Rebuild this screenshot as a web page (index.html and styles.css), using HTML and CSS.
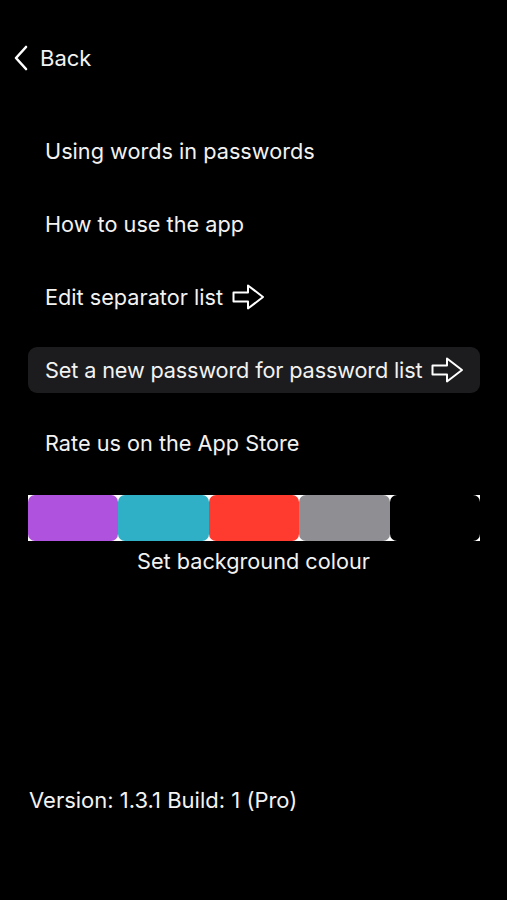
FILE: index.html
```html
<!DOCTYPE html>
<html>
<head>
<meta charset="utf-8">
<link rel="stylesheet" href="styles.css">
</head>
<body>
<div class="screen">
  <div class="nav">
    <svg class="chev" width="16" height="26" viewBox="0 0 16 26"><path d="M13 2 L3 13 L13 24" fill="none" stroke="#fff" stroke-width="2.6" stroke-linecap="round" stroke-linejoin="round"/></svg>
    <span class="back">Back</span>
  </div>
  <div class="menu">
    <div class="row">Using words in passwords</div>
    <div class="row">How to use the app</div>
    <div class="row">Edit separator list <svg class="arrow" width="33" height="26" viewBox="0 0 33 26"><path d="M1.5 8.5 H16 V1.5 L31 13 L16 24.5 V17.5 H1.5 Z" fill="none" stroke="#fff" stroke-width="2" stroke-linejoin="round"/></svg></div>
    <div class="row sel"><span class="tight">Set a new password for password list</span> <svg class="arrow" width="33" height="26" viewBox="0 0 33 26"><path d="M1.5 8.5 H16 V1.5 L31 13 L16 24.5 V17.5 H1.5 Z" fill="none" stroke="#fff" stroke-width="2" stroke-linejoin="round"/></svg></div>
    <div class="row">Rate us on the App Store</div>
  </div>
  <div class="swatches">
    <div class="sw purple"></div>
    <div class="sw teal"></div>
    <div class="sw red"></div>
    <div class="sw gray"></div>
    <div class="sw black"></div>
  </div>
  <div class="caption">Set background colour</div>
  <div class="version">Version: 1.3.1 Build: 1 (Pro)</div>
</div>
</body>
</html>
```
FILE: styles.css
```css
html, body { margin: 0; padding: 0; background: #000; }
body { width: 507px; height: 900px; overflow: hidden; font-family: Inter, "Liberation Sans", sans-serif; color: #f2f2f2; }
.screen { display: flex; flex-direction: column; height: 900px; }
.nav { display: flex; align-items: center; height: 26px; margin-top: 45px; padding-left: 13px; }
.chev { display: block; }
.back { font-size: 22px; margin-left: 11px; line-height: 26px; }
.menu { display: flex; flex-direction: column; margin-top: 57px; padding: 0 27px 0 28px; gap: 27px; }
.row { height: 46px; display: flex; align-items: center; padding-left: 17px; font-size: 21.7px; border-radius: 9px; }
.row.sel { background: #1c1c1e; }
.tight { letter-spacing: -0.15px; }
.arrow { margin-left: 9px; display: block; }
.swatches { display: flex; margin: 29px 27px 0 28px; height: 46px; background: #fff; }
.sw { flex: 1; border-radius: 7px; }
.purple { background: #af52de; }
.teal { background: #30b0c7; }
.red { background: #ff3b30; }
.gray { background: #8e8e93; }
.black { background: #000; }
.caption { text-align: center; font-size: 21.7px; margin-top: 6px; line-height: 28px; }
.version { font-size: 22px; margin-top: auto; margin-bottom: 87px; padding-left: 29px; line-height: 26px; }
```
